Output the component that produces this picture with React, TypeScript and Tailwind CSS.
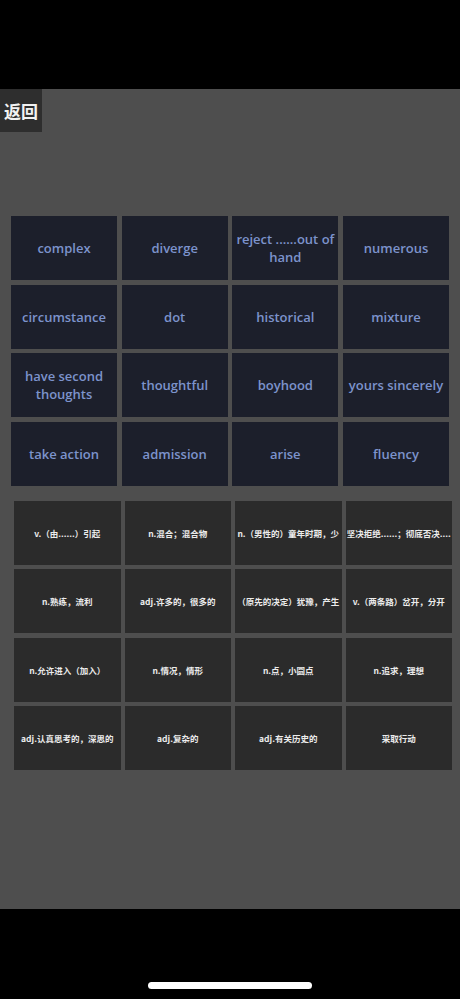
import React from "react";

const words = [
  "complex", "diverge", "reject ......out of hand", "numerous",
  "circumstance", "dot", "historical", "mixture",
  "have second thoughts", "thoughtful", "boyhood", "yours sincerely",
  "take action", "admission", "arise", "fluency",
];

const meanings = [
  "v.（由......）引起", "n.混合；混合物", "n.（男性的）童年时期，少", "坚决拒绝......；彻底否决....",
  "n.熟练，流利", "adj.许多的，很多的", "（原先的决定）犹豫，产生", "v.（两条路）岔开，分开",
  "n.允许进入（加入）", "n.情况，情形", "n.点，小圆点", "n.追求，理想",
  "adj.认真思考的，深思的", "adj.复杂的", "adj.有关历史的", "采取行动",
];

export default function App() {
  return (
    <div className="w-[460px] h-[999px] bg-black flex flex-col" style={{ fontFamily: '"Open Sans", "Noto Sans CJK SC", sans-serif' }}>
      <div className="h-[89px] shrink-0 bg-black" />
      <div className="h-[820px] shrink-0 bg-[#4e4e4e] flex flex-col">
        <div className="flex">
          <div className="w-[42px] h-[43px] bg-[#2e2e2e] flex items-center justify-center text-[#f2f2f2] text-[17px] font-bold" style={{ fontFamily: '"Noto Sans CJK SC", sans-serif' }}>
            返回
          </div>
        </div>
        <div className="mt-[84px] pl-[11px] pr-[11px] grid grid-cols-4 gap-x-[4.67px] gap-y-[4.67px]">
          {words.map((w) => (
            <div key={w} className="h-[64px] bg-[#1c1f2b] flex items-center justify-center text-center px-[2px] text-[#7c93cc] text-[13px] font-semibold leading-[18px]">
              {w}
            </div>
          ))}
        </div>
        <div className="mt-[15px] pl-[14px] pr-[8px] grid grid-cols-4 gap-x-[4px] gap-y-[4.5px]">
          {meanings.map((m) => (
            <div key={m} className="h-[64px] bg-[#2b2b2b] overflow-hidden flex items-center justify-center">
              <div className="w-full text-center whitespace-nowrap overflow-hidden text-[#ececec] text-[8.5px] font-bold leading-[12px]" style={{ fontFamily: '"Noto Sans CJK SC", sans-serif' }}>
                {m}
              </div>
            </div>
          ))}
        </div>
      </div>
      <div className="flex-1 bg-black flex items-end justify-center pb-[10px]">
        <div className="w-[164px] h-[7px] rounded-full bg-white" />
      </div>
    </div>
  );
}
